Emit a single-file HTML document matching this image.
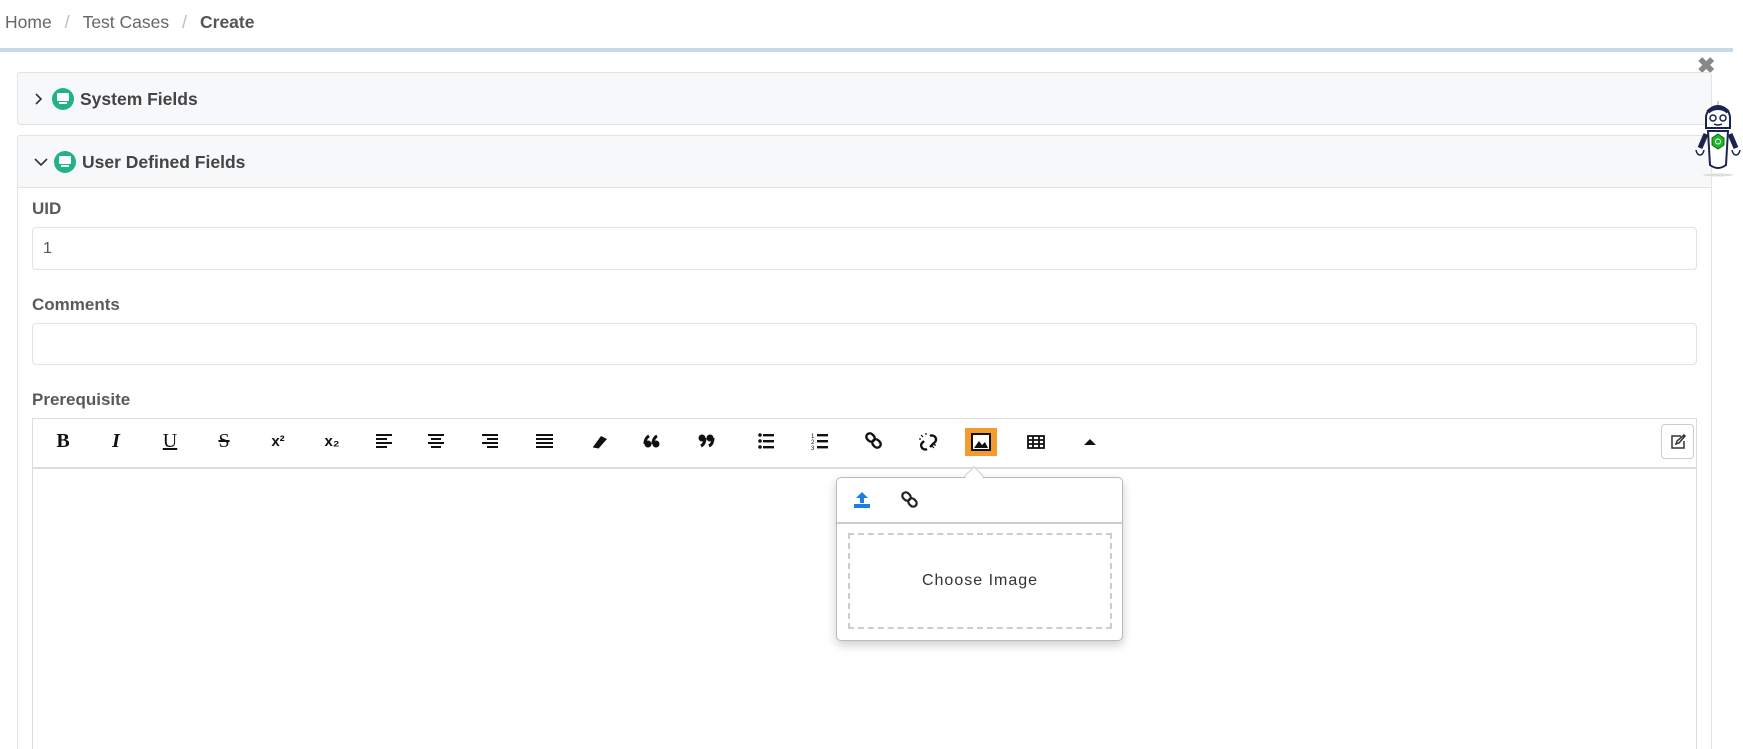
<!DOCTYPE html>
<html style="overflow:hidden;height:749px"><head><meta charset="utf-8"><style>
*{box-sizing:border-box;margin:0;padding:0}
html,body{width:1743px;height:749px;overflow:hidden}
body{background:#fff;font-family:"Liberation Sans",sans-serif;position:relative;color:#555}
.a{position:absolute}
.bc{left:5px;top:12px;font-size:17.5px;color:#666}
.bc span{color:#bbb;margin:0 13px}
.bc b{color:#555}
.line{left:0;top:48px;width:1733px;height:4px;background:#c6d8e6}
.panel{left:17px;width:1695px;border:1px solid #e3e3e3;background:#f7f8fa;border-radius:3px}
.ptitle{position:absolute;left:16px;font-size:17.5px;font-weight:bold;color:#444;display:flex;align-items:center}
.ico{width:22px;height:22px;border-radius:50%;background:#20b38a;display:inline-block;margin:0 6px 0 8px;position:relative}
.ico:before{content:"";position:absolute;left:5px;top:5px;width:12px;height:8px;background:#fff;border-radius:1px}
.ico:after{content:"";position:absolute;left:7px;top:14px;width:8px;height:2px;background:#fff}
.lbl{left:32px;font-size:17px;font-weight:bold;color:#5a5a5a}
.inp{left:32px;width:1665px;border:1px solid #e2e2e2;border-radius:4px;background:#fff}
.tb{left:32px;top:418px;width:1665px;height:51px;border:1px solid #ddd;border-bottom:2px solid #ddd;background:#fff}
.ti{position:absolute;top:430px;width:24px;text-align:center;font-size:20px;color:#111;font-family:"Liberation Serif",serif;font-weight:bold}
</style></head><body>
<div class="a bc">Home<span>/</span>Test Cases<span>/</span><b>Create</b></div>
<div class="a line"></div>
<div class="a" style="left:1697px;top:53px;font-size:22px;color:#888;font-weight:bold">✖</div>
<div class="a panel" style="top:72px;height:53px"><div class="ptitle" style="top:15px"><svg width="10" height="14"><path d="M2 2 L7 7 L2 12" fill="none" stroke="#333" stroke-width="1.6"/></svg><span class="ico"></span>System Fields</div></div>
<div class="a panel" style="top:135px;height:630px;background:#fff">
<div style="height:52px;background:#f7f8fa;border-bottom:1px solid #e3e3e3;position:relative"><div class="ptitle" style="top:15px"><svg width="14" height="10"><path d="M1 2 L7 8 L13 2" fill="none" stroke="#333" stroke-width="1.6"/></svg><span class="ico" style="margin-left:6px"></span>User Defined Fields</div></div></div>
<div class="a lbl" style="top:199px">UID</div>
<div class="a inp" style="top:227px;height:43px;padding:12px 10px;font-size:16px;color:#555">1</div>
<div class="a lbl" style="top:295px">Comments</div>
<div class="a inp" style="top:323px;height:42px"></div>
<div class="a lbl" style="top:390px">Prerequisite</div>
<div class="a" style="left:32px;top:418px;width:1665px;height:345px;border:1px solid #ddd"></div>
<div class="a tb"></div>
<div class="ti" style="left:51px">B</div>
<div class="ti" style="left:104px;font-style:italic">I</div>
<div class="ti" style="left:158px;text-decoration:underline;font-weight:normal">U</div>
<div class="ti" style="left:212px;text-decoration:line-through;font-weight:normal">S</div>
<div class="ti" style="left:266px;font-family:'Liberation Sans';font-size:15px;top:433px">x²</div>
<div class="ti" style="left:320px;font-family:'Liberation Sans';font-size:15px;top:433px">x₂</div>
<svg class="a" style="left:370px;top:430px" width="730" height="24" fill="#111">
<g><rect x="6" y="4" width="16" height="2"/><rect x="6" y="8" width="11" height="2"/><rect x="6" y="12" width="16" height="2"/><rect x="6" y="16" width="11" height="2"/></g>
<g transform="translate(54 0)"><rect x="4" y="4" width="16" height="2"/><rect x="7" y="8" width="10" height="2"/><rect x="4" y="12" width="16" height="2"/><rect x="7" y="16" width="10" height="2"/></g>
<g transform="translate(108 0)"><rect x="4" y="4" width="16" height="2"/><rect x="9" y="8" width="11" height="2"/><rect x="4" y="12" width="16" height="2"/><rect x="9" y="16" width="11" height="2"/></g>
<g transform="translate(162 0)"><rect x="4" y="4" width="17" height="2"/><rect x="4" y="8" width="17" height="2"/><rect x="4" y="12" width="17" height="2"/><rect x="4" y="16" width="17" height="2"/></g>
<g transform="translate(216 0)"><path d="M7 17 L15 6 L21 9 L13 18 Z"/><path d="M7 17 L13 18" stroke="#111"/></g>
<g transform="translate(270 0)"><circle cx="8" cy="14" r="3.5"/><circle cx="16" cy="14" r="3.5"/><path d="M5 14 q0 -6 4 -8 M13 14 q0 -6 4 -8" stroke="#111" stroke-width="3" fill="none"/></g>
<g transform="translate(324 0)"><circle cx="8" cy="8" r="3.5"/><circle cx="16" cy="8" r="3.5"/><path d="M11 8 q0 6 -4 8 M19 8 q0 6 -4 8" stroke="#111" stroke-width="3" fill="none"/></g>
<g transform="translate(384 0)"><circle cx="6" cy="5" r="1.8"/><circle cx="6" cy="11" r="1.8"/><circle cx="6" cy="17" r="1.8"/><rect x="9" y="4" width="11" height="2.4"/><rect x="9" y="10" width="11" height="2.4"/><rect x="9" y="16" width="11" height="2.4"/></g>
<g transform="translate(438 0)"><rect x="9" y="4" width="11" height="2.4"/><rect x="9" y="10" width="11" height="2.4"/><rect x="9" y="16" width="11" height="2.4"/><text x="3" y="8" font-size="6">1</text><text x="3" y="14" font-size="6">2</text><text x="3" y="20" font-size="6">3</text></g>
<g transform="translate(492 0)" fill="none" stroke="#111" stroke-width="2.4"><rect x="5" y="3" width="7" height="9" rx="3.5" transform="rotate(-45 8.5 7.5)"/><rect x="11" y="9" width="7" height="9" rx="3.5" transform="rotate(-45 14.5 13.5)"/></g>
<g transform="translate(546 0)" fill="none" stroke="#111" stroke-width="2.4"><path d="M14 6 a4 4 0 0 1 4 7 l-4 4 M8 11 l-2 2 a4 4 0 0 0 5 6"/><path d="M5 5 l2 2 M10 3 v2 M3 9 h2 M18 18 l-2 -2 M20 15 h-2" stroke-width="1.2"/></g>
</svg>
<div class="a" style="left:965px;top:428px;width:32px;height:28px;background:#f39b2f"></div>
<svg class="a" style="left:971px;top:433px" width="20" height="18"><rect x="1" y="1" width="18" height="16" fill="#fff" stroke="#111" stroke-width="2"/><path d="M3 15 L8 8 L11 12 L14 9 L17 15 Z" fill="#111"/></svg>
<svg class="a" style="left:1026px;top:434px" width="20" height="16" fill="none" stroke="#111" stroke-width="1.8"><rect x="2" y="2" width="16" height="12"/><path d="M2 6h16M2 10h16M7 2v12M13 2v12"/></svg>
<svg class="a" style="left:1083px;top:437px" width="14" height="10"><path d="M1 8 L7 2 L13 8 Z" fill="#111"/></svg>
<div class="a" style="left:1661px;top:424px;width:33px;height:35px;border:1px solid #ccc;border-radius:4px;background:#fff"></div>
<svg class="a" style="left:1669px;top:433px" width="18" height="18" fill="none" stroke="#333" stroke-width="1.5"><path d="M12 3 H3 V15 H15 V8"/><path d="M7 11 L8 8 L15 2 L16 3 L10 10 Z"/></svg>
<div class="a" style="left:836px;top:477px;width:287px;height:164px;border:1px solid #bbb;border-radius:5px;background:#fff;box-shadow:0 4px 10px rgba(0,0,0,.2)">
<div style="height:46px;border-bottom:2px solid #ccc"></div>
<div style="position:absolute;left:11px;top:55px;width:264px;height:96px;border:2px dashed #ccc;text-align:center;line-height:92px;font-size:16px;letter-spacing:1px;color:#333">Choose Image</div></div>
<div class="a" style="left:967px;top:469px;width:14px;height:14px;background:#fff;border-left:1px solid #ccc;border-top:1px solid #ccc;transform:rotate(45deg)"></div>
<svg class="a" style="left:852px;top:490px" width="20" height="20"><path d="M10 2 L16 8 H12 V13 H8 V8 H4 Z" fill="#1a7ee6"/><rect x="2" y="14" width="16" height="4" fill="#1a7ee6"/></svg>
<svg class="a" style="left:900px;top:490px" width="20" height="20" fill="none" stroke="#222" stroke-width="2.2"><rect x="3" y="2" width="7" height="9" rx="3.5" transform="rotate(-45 6.5 6.5)"/><rect x="9" y="8" width="7" height="9" rx="3.5" transform="rotate(-45 12.5 12.5)"/></svg>
<svg class="a" style="left:1693px;top:100px" width="50" height="80">
<ellipse cx="25" cy="75" rx="15" ry="1.5" fill="#ddd"/>
<path d="M25 1 v5" stroke="#99a"/>
<path d="M13 18 a12 12 0 0 1 24 0 v10 h-24 Z" fill="#fff" stroke="#1b2350" stroke-width="2"/>
<path d="M15 12 a12 9 0 0 1 20 0" stroke="#1b2350" stroke-width="4" fill="none"/>
<circle cx="20" cy="18" r="3" fill="#fff" stroke="#1b2350" stroke-width="1.5"/><circle cx="30" cy="18" r="3" fill="#fff" stroke="#1b2350" stroke-width="1.5"/>
<path d="M21 24 q4 2 8 0" stroke="#1b2350" fill="none" stroke-width="1.5"/>
<path d="M15 31 h20 l-2 34 q-8 6 -16 0 Z" fill="#fff" stroke="#1b2350" stroke-width="2"/>
<polygon points="25,34 31,38 31,45 25,49 19,45 19,38" fill="#1db52a" stroke="#0a6a12"/>
<circle cx="25" cy="41.5" r="2.5" fill="none" stroke="#fff" stroke-width="1"/>
<path d="M13 34 l-6 14 M37 34 l6 14" stroke="#1b2350" stroke-width="5"/>
<path d="M3 50 q1 5 4 5 q3 0 4 -5 M39 50 q1 5 4 5 q3 0 4 -5" stroke="#1b2350" stroke-width="1.5" fill="none"/>
</svg>
</body></html>
